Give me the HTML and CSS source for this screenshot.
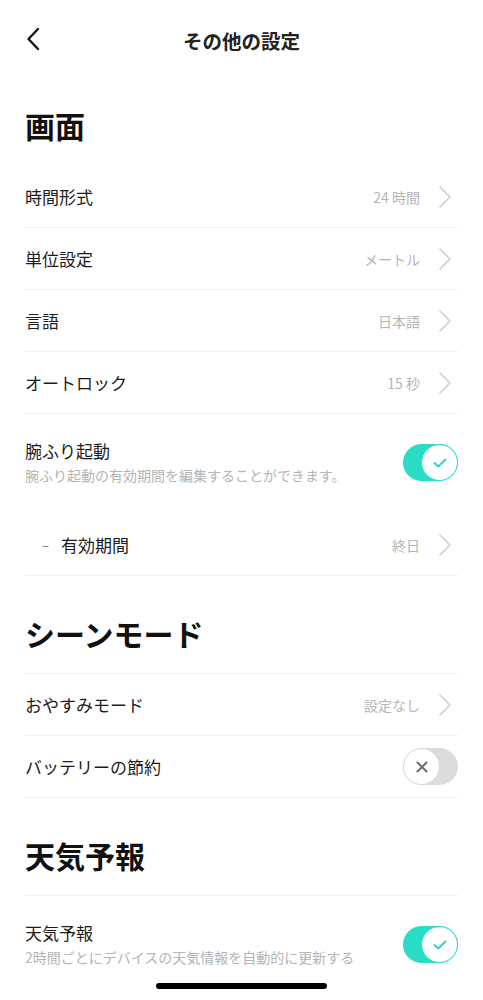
FILE: index.html
```html
<!DOCTYPE html>
<html lang="ja">

<head>
    <meta charset="UTF-8" />
    <meta name="viewport" content="width=device-width, initial-scale=1.0" />
    <title>その他の設定</title>
    <link rel="stylesheet" href="styles.css">
</head>

<body>
    <div class="page">
        <header class="nav">
            <svg class="back" width="14" height="24" viewBox="0 0 14 24">
                <path d="M12 2 L2.5 12 L12 22" fill="none" stroke="#111" stroke-width="2.4" stroke-linecap="round" stroke-linejoin="round" />
            </svg>
            <h1 class="nav-title">その他の設定</h1>
            <span></span>
        </header>

        <h2 class="section-title first">画面</h2>

        <div class="row">
            <span class="row-label">時間形式</span>
            <span class="row-value">24 時間</span>
            <svg class="chevron" width="14" height="24" viewBox="0 0 14 24">
                <path d="M2 2 L12 12 L2 22" fill="none" stroke="#cfcfcf" stroke-width="1.6" stroke-linecap="round" stroke-linejoin="round" />
            </svg>
        </div>
        <div class="row">
            <span class="row-label">単位設定</span>
            <span class="row-value">メートル</span>
            <svg class="chevron" width="14" height="24" viewBox="0 0 14 24">
                <path d="M2 2 L12 12 L2 22" fill="none" stroke="#cfcfcf" stroke-width="1.6" stroke-linecap="round" stroke-linejoin="round" />
            </svg>
        </div>
        <div class="row">
            <span class="row-label">言語</span>
            <span class="row-value">日本語</span>
            <svg class="chevron" width="14" height="24" viewBox="0 0 14 24">
                <path d="M2 2 L12 12 L2 22" fill="none" stroke="#cfcfcf" stroke-width="1.6" stroke-linecap="round" stroke-linejoin="round" />
            </svg>
        </div>
        <div class="row">
            <span class="row-label">オートロック</span>
            <span class="row-value">15 秒</span>
            <svg class="chevron" width="14" height="24" viewBox="0 0 14 24">
                <path d="M2 2 L12 12 L2 22" fill="none" stroke="#cfcfcf" stroke-width="1.6" stroke-linecap="round" stroke-linejoin="round" />
            </svg>
        </div>
        <div class="row tall no-line">
            <div class="row-text">
                <div class="row-label">腕ふり起動</div>
                <div class="row-sub">腕ふり起動の有効期間を編集することができます。</div>
            </div>
            <span class="switch on">
                <span class="knob">
                    <svg width="14" height="10" viewBox="0 0 14 10">
                        <path d="M1.5 5 L5.2 8.5 L12.5 1.5" fill="none" stroke="#22d6bf" stroke-width="1.8" stroke-linecap="round" stroke-linejoin="round" />
                    </svg>
                </span>
            </span>
        </div>
        <div class="row">
            <span class="row-label sub-item"><span class="dash">–</span>有効期間</span>
            <span class="row-value">終日</span>
            <svg class="chevron" width="14" height="24" viewBox="0 0 14 24">
                <path d="M2 2 L12 12 L2 22" fill="none" stroke="#cfcfcf" stroke-width="1.6" stroke-linecap="round" stroke-linejoin="round" />
            </svg>
        </div>

        <h2 class="section-title">シーンモード</h2>

        <div class="row">
            <span class="row-label">おやすみモード</span>
            <span class="row-value">設定なし</span>
            <svg class="chevron" width="14" height="24" viewBox="0 0 14 24">
                <path d="M2 2 L12 12 L2 22" fill="none" stroke="#cfcfcf" stroke-width="1.6" stroke-linecap="round" stroke-linejoin="round" />
            </svg>
        </div>
        <div class="row">
            <span class="row-label">バッテリーの節約</span>
            <span class="switch off">
                <span class="knob">
                    <svg width="12" height="12" viewBox="0 0 12 12">
                        <path d="M1.5 1.5 L10.5 10.5 M10.5 1.5 L1.5 10.5" fill="none" stroke="#6e6e6e" stroke-width="2" stroke-linecap="round" />
                    </svg>
                </span>
            </span>
        </div>

        <h2 class="section-title">天気予報</h2>

        <div class="row tall no-line">
            <div class="row-text">
                <div class="row-label">天気予報</div>
                <div class="row-sub">2時間ごとにデバイスの天気情報を自動的に更新する</div>
            </div>
            <span class="switch on">
                <span class="knob">
                    <svg width="14" height="10" viewBox="0 0 14 10">
                        <path d="M1.5 5 L5.2 8.5 L12.5 1.5" fill="none" stroke="#22d6bf" stroke-width="1.8" stroke-linecap="round" stroke-linejoin="round" />
                    </svg>
                </span>
            </span>
        </div>
    </div>

    <div class="home-bar"></div>
</body>

</html>
```

FILE: styles.css
```css
body {
    margin: 0;
    background: #fff;
    color: #1c1c1c;
    font-family: "Noto Sans CJK JP", "Noto Sans", sans-serif;
}

.page {
    padding: 0 25px;
}

.nav {
    height: 80px;
    display: grid;
    grid-template-columns: 1fr auto 1fr;
    align-items: center;
}

.back {
    margin-left: 1px;
    margin-top: -2px;
}

.nav-title {
    margin: 0;
    font-size: 19.5px;
    font-weight: 700;
    color: #222;
}

.section-title {
    margin: 0;
    padding: 37px 0 20px;
    font-size: 30px;
    line-height: 40px;
    font-weight: 700;
    color: #111;
    border-bottom: 1px solid #f1f1f1;
}

.section-title.first {
    padding: 25px 0 21px;
    border-bottom: none;
}

.row {
    height: 61px;
    display: flex;
    align-items: center;
    border-bottom: 1px solid #f1f1f1;
}

.row.tall {
    height: auto;
    padding: 25px 0 28px;
}

.row.no-line {
    border-bottom: none;
}

.row-text {
    flex: 1;
}

.row-label {
    flex: 1;
    font-size: 17px;
    line-height: 24px;
}

.row-sub {
    font-size: 14px;
    line-height: 21px;
    margin-top: 2px;
    color: #b4b4b4;
}

.sub-item {
    padding-left: 17px;
    display: flex;
    align-items: center;
}

.dash {
    font-size: 13px;
    color: #777;
    width: 19px;
}

.row-value {
    font-size: 14px;
    color: #b5b5b5;
    margin-right: 18px;
}

.chevron {
    margin-right: 6px;
}

.switch {
    width: 55px;
    height: 37px;
    border-radius: 19px;
    display: flex;
    align-items: center;
    box-sizing: border-box;
}

.switch.on {
    background: #29dcc5;
    justify-content: flex-end;
}

.switch.off {
    background: #dcdcdc;
    justify-content: flex-start;
}

.knob {
    width: 37px;
    height: 37px;
    border-radius: 50%;
    background: #fff;
    box-sizing: border-box;
    display: flex;
    align-items: center;
    justify-content: center;
}

.switch.on .knob {
    border: 1.5px solid #29dcc5;
}

.switch.off .knob {
    border: 1.5px solid #d8d8d8;
}

.home-bar {
    position: fixed;
    left: 156px;
    bottom: 11px;
    width: 171px;
    height: 6px;
    border-radius: 3px;
    background: #000;
}
```
